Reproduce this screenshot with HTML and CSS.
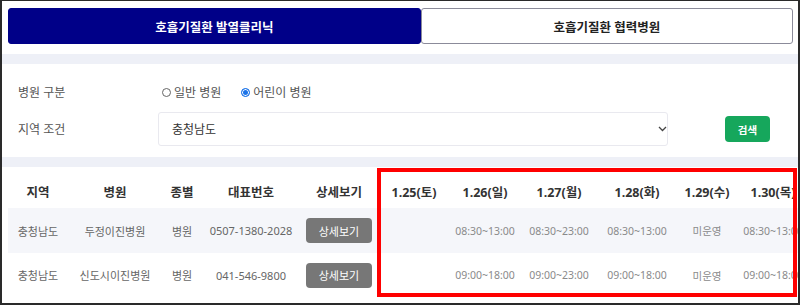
FILE: index.html
```html
<!DOCTYPE html>
<html lang="ko">
<head>
    <meta charset="UTF-8">
    <meta name="viewport" content="width=device-width, initial-scale=1.0">
    <title>호흡기질환 발열클리닉</title>
    <link rel="stylesheet" href="styles.css">
</head>
<body>
    <div class="tabs">
        <div class="tab active">호흡기질환 발열클리닉</div>
        <div class="tab">호흡기질환 협력병원</div>
    </div>

    <div class="band"></div>

    <div class="search">
        <div class="label">병원 구분</div>
        <div class="radios">
            <span class="radio"><span class="dot"></span>일반 병원</span>
            <span class="radio"><span class="dot checked"></span>어린이 병원</span>
        </div>
        <div class="label">지역 조건</div>
        <div class="select">
            <span>충청남도</span>
            <svg width="9" height="6" viewBox="0 0 9 6"><path d="M1 1l3.5 3.5L8 1" fill="none" stroke="#444" stroke-width="1.3"/></svg>
        </div>
        <button class="btn-search">검색</button>
    </div>

    <div class="band"></div>

    <div class="list">
        <table>
            <colgroup>
                <col style="width:60px"><col style="width:94px"><col style="width:40px">
                <col style="width:98px"><col style="width:78px"><col style="width:72px">
                <col style="width:70px"><col style="width:78px"><col style="width:78px">
                <col style="width:62px"><col style="width:70px">
            </colgroup>
            <thead>
                <tr>
                    <th>지역</th><th>병원</th><th>종별</th><th>대표번호</th><th>상세보기</th>
                    <th>1.25(토)</th><th>1.26(일)</th><th>1.27(월)</th><th>1.28(화)</th><th>1.29(수)</th><th>1.30(목)</th>
                </tr>
            </thead>
            <tbody>
                <tr class="odd">
                    <td>충청남도</td><td>두정이진병원</td><td>병원</td><td>0507-1380-2028</td>
                    <td><button class="btn-detail">상세보기</button></td>
                    <td class="time"></td><td class="time">08:30~13:00</td><td class="time">08:30~23:00</td>
                    <td class="time">08:30~13:00</td><td class="time">미운영</td><td class="time">08:30~13:00</td>
                </tr>
                <tr>
                    <td>충청남도</td><td>신도시이진병원</td><td>병원</td><td>041-546-9800</td>
                    <td><button class="btn-detail">상세보기</button></td>
                    <td class="time"></td><td class="time">09:00~18:00</td><td class="time">09:00~23:00</td>
                    <td class="time">09:00~18:00</td><td class="time">미운영</td><td class="time">09:00~18:00</td>
                </tr>
            </tbody>
        </table>
    </div>

    <div class="highlight"></div>
</body>
</html>
```

FILE: styles.css
```css
html, body {
    height: 100%;
}
body {
    margin: 0;
    box-sizing: border-box;
    border: 2px solid #2a2a2a;
    border-top-width: 1px;
    font-family: "Noto Sans", "Noto Sans CJK KR", sans-serif;
    color: #555;
    background: #fff;
    overflow: hidden;
    position: relative;
}
.tabs {
    display: flex;
    height: 36px;
    margin: 7px 5px 10px 6px;
}
.tab {
    flex: 1;
    display: flex;
    align-items: center;
    justify-content: center;
    border: 1px solid #8b8b9a;
    border-radius: 3px;
    font-size: 12.5px;
    font-weight: bold;
    color: #222;
    background: #fff;
}
.tab.active {
    flex: 0 0 411px;
    background: #000088;
    border-color: #000088;
    color: #fff;
}
.band {
    height: 10px;
    background: #eef0f7;
}
.search {
    display: grid;
    grid-template-columns: 140px 510px auto;
    grid-template-rows: 20px 34px;
    row-gap: 10px;
    align-items: center;
    padding: 18px 0 11px 16px;
    font-size: 12px;
}
.label {
    color: #555;
}
.radios {
    grid-column: span 2;
    display: flex;
    gap: 20px;
    padding-left: 4px;
}
.radio {
    display: flex;
    align-items: center;
    gap: 3px;
}
.dot {
    width: 7px;
    height: 7px;
    border: 1px solid #666;
    border-radius: 50%;
}
.dot.checked {
    border-color: #1a73e8;
    background: #1a73e8;
    box-shadow: inset 0 0 0 1px #fff;
}
.select {
    height: 34px;
    box-sizing: border-box;
    border: 1px solid #e9e9ef;
    border-radius: 3px;
    display: flex;
    align-items: center;
    justify-content: space-between;
    padding: 0 0 0 13px;
    color: #333;
    font-size: 12px;
}
.btn-search {
    justify-self: start;
    margin-left: 57px;
    width: 45px;
    height: 26px;
    border: none;
    border-radius: 4px;
    background: #16a75c;
    color: #fff;
    font-family: inherit;
    font-size: 10.5px;
    font-weight: bold;
}
.list {
    padding-left: 6px;
    overflow: hidden;
}
table {
    table-layout: fixed;
    width: 800px;
    border-collapse: collapse;
}
th {
    height: 33px;
    padding: 8px 0 0;
    font-size: 12.5px;
    font-weight: bold;
    color: #333;
    white-space: nowrap;
    overflow: hidden;
}
td {
    height: 45px;
    padding: 0;
    text-align: center;
    font-size: 11px;
    color: #666;
    white-space: nowrap;
    overflow: hidden;
}
tbody tr:last-child td {
    height: 44px;
}
tr.odd td {
    background: #f5f6fa;
}
td.time {
    color: #8a8a8a;
    font-size: 10.5px;
}
.btn-detail {
    width: 66px;
    height: 25px;
    border: none;
    border-radius: 4px;
    background: #777;
    color: #fff;
    font-family: inherit;
    font-size: 11px;
}
.highlight {
    position: absolute;
    left: 375px;
    top: 167px;
    width: 420px;
    height: 129px;
    box-sizing: border-box;
    border: 4px solid #f00;
}
```
